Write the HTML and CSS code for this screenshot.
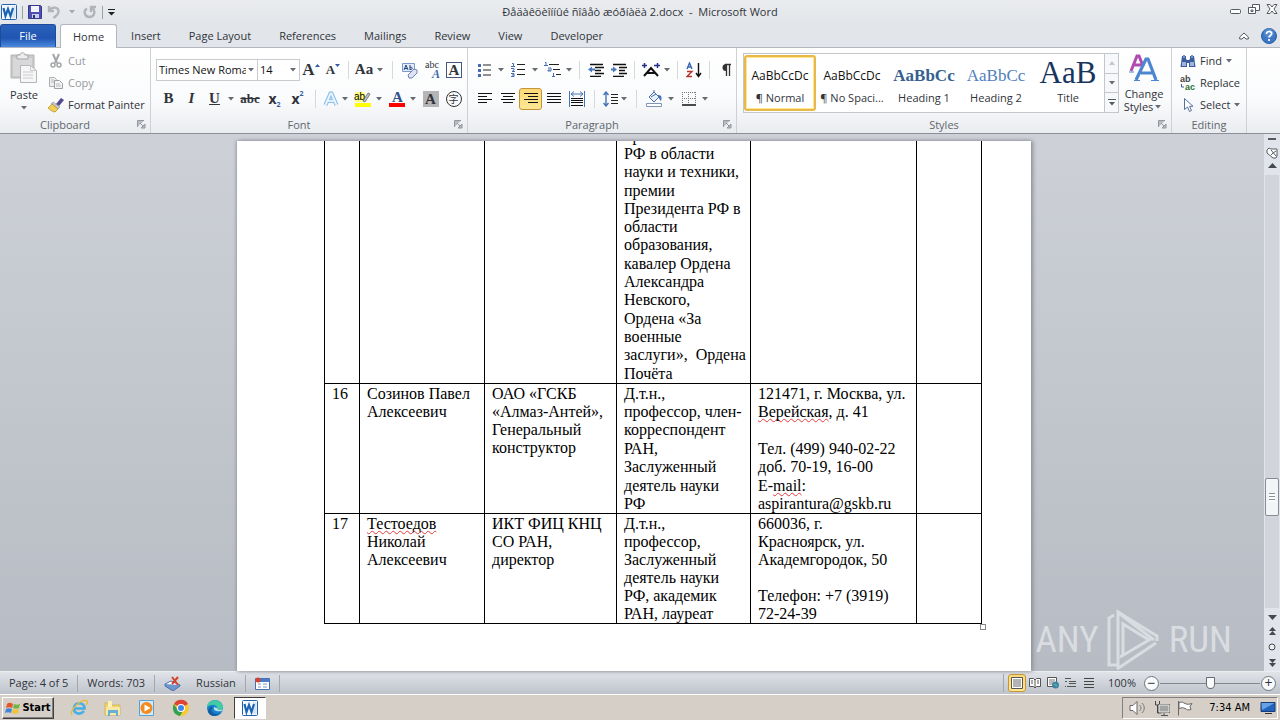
FILE: index.html
```html
<!DOCTYPE html>
<html lang="ru">
<head>
    <meta charset="UTF-8">
    <meta name="viewport" content="width=device-width, initial-scale=1.0">
    <title>Microsoft Word</title>
    <link rel="stylesheet" href="styles.css">
</head>
<body>
    <!-- shared shapes -->
    <svg class="defs" aria-hidden="true">
        <symbol id="down" viewBox="0 0 6 4"><path d="M0 0h6L3 3.5z" fill="#666b73"/></symbol>
        <symbol id="launch" viewBox="0 0 9 9"><path d="M.5 7V.5H7M3 3l3 3M8 4v4H4z" fill="#b8bcc2" stroke="#9297a0"/></symbol>
        <symbol id="word" viewBox="0 0 16 16"><rect x=".5" y=".5" width="15" height="15" rx="1" fill="#f4f9ff" stroke="#2360ad"/><path d="M11 2h3.500v12H11z" fill="#d5e4f6"/><path d="M2.500 4l2 8L7 5l2.500 7 2.500-8" fill="none" stroke="#1b64b4" stroke-width="2.200"/></symbol>
    </svg>

    <header class="titlebar">
        <div class="quick">
            <svg width="16" height="16"><use href="#word"/></svg>
            <span class="bar"></span>
            <button aria-label="Save"><svg width="14" height="14"><path d="M.5.500h12l1 1v12H.5z" fill="#4d4fb5" stroke="#37398d"/><path d="M3 1h8v6H3z" fill="#f5f6fd"/><path d="M4 9h7v4H4z" fill="#c8cdf0"/><path d="M5 10h2v3H5z" fill="#303277"/></svg></button>
            <button aria-label="Undo"><svg width="15" height="14"><path d="M2 1v5h5M2.500 5.500C5 1 12 2 11.500 7c-.3 3-3 4-5 6" fill="none" stroke="#b1b4b9" stroke-width="2.400"/></svg></button>
            <svg class="arrow faint"><use href="#down"/></svg>
            <button aria-label="Redo"><svg width="14" height="14"><path d="M4 3.500C0 6 1.500 12 6.500 12S13 5.500 9 3M8 7V2h5" fill="none" stroke="#b1b4b9" stroke-width="2.400"/></svg></button>
            <span class="bar"></span>
            <button aria-label="Customize toolbar"><svg width="7" height="7"><path d="M0 .500h7" stroke="#222"/><path d="M0 3h7L3.500 6.500z" fill="#222"/></svg></button>
        </div>
        <h1>Ðåäàêöèîííûé ñîâåò æóðíàëà 2.docx&nbsp; -&nbsp; Microsoft Word</h1>
        <div class="window-buttons">
            <button aria-label="Minimize"><svg width="12" height="12"><rect x=".5" y="6.500" width="10" height="4" rx="1" fill="#fff" stroke="#555a62"/></svg></button>
            <button aria-label="Restore"><svg width="12" height="12"><path d="M4.500 1.500h7v6h-7z" fill="#fff" stroke="#555a62"/><path d="M.5 4.500h7v6h-7z" fill="#fff" stroke="#555a62"/><path d="M3 7h2v1.500H3z" fill="none" stroke="#555a62"/></svg></button>
            <button aria-label="Close"><svg width="12" height="12"><path d="M1 1.500h3l2 2.500 2-2.500h3L8 6l3 4.500H8L6 8l-2 2.500H1L4 6z" fill="#fff" stroke="#555a62"/></svg></button>
        </div>
    </header>

    <nav class="tabs">
        <button class="file">File</button>
        <button class="tab active">Home</button>
        <button class="tab">Insert</button>
        <button class="tab">Page Layout</button>
        <button class="tab">References</button>
        <button class="tab">Mailings</button>
        <button class="tab">Review</button>
        <button class="tab">View</button>
        <button class="tab">Developer</button>
        <div class="help">
            <button aria-label="Minimize ribbon"><svg width="10" height="8"><path d="M.7 5L5 1l4.300 4v2H7L5 5 3 7H.7z" fill="#fff" stroke="#555a62"/></svg></button>
            <button aria-label="Help"><svg width="16" height="16"><circle cx="8" cy="8" r="7.500" fill="#3c76c4" stroke="#2e5fa6"/><circle cx="8" cy="5" r="5" fill="#6c9edc" opacity=".5"/><path d="M5.500 6c0-3.300 5.200-3.300 5.200-.4C10.700 7.500 8 7.400 8 9.500M8 11v2" fill="none" stroke="#fff" stroke-width="1.700"/></svg></button>
        </div>
    </nav>

    <section class="ribbon">
        <div class="group clipboard">
            <div class="content">
                <button class="paste">
                    <svg width="28" height="32"><path d="M1 3h23v23H1z" fill="#c9c9cb" stroke="#b5b5b7"/><path d="M3 6h19v18H3z" fill="#d8d8da"/><path d="M7 5V3h3c0-3 5-3 5 0h3v4H7z" fill="#ececee" stroke="#a6a6a8"/><path d="M10.500 13.500h10l6 5v12h-16z" fill="#f6f6f8" stroke="#b5b5b9"/><path d="M20.500 13.500v5h6M13 20h10M13 23h10M13 26h10" fill="none" stroke="#ccccd0"/></svg>
                    <span>Paste</span>
                    <svg class="arrow"><use href="#down"/></svg>
                </button>
                <div class="stack">
                    <button class="off"><svg width="16" height="16"><path d="M5 1l4 9M11 1L7 10" stroke="#a4a6a9" stroke-width="2"/><circle cx="5" cy="12" r="2" fill="none" stroke="#a4a6a9" stroke-width="1.500"/><circle cx="11" cy="12" r="2" fill="none" stroke="#a4a6a9" stroke-width="1.500"/></svg>Cut</button>
                    <button class="off"><svg width="16" height="16"><path d="M1.500 2.500h5l2 2v7h-7z" fill="#eee" stroke="#adafb2"/><path d="M6.500 5.500h5l3 3v5h-8z" fill="#f4f4f4" stroke="#9fa1a5"/><path d="M3 5h3M3 7h3M8 9h4M8 11h5" stroke="#b8babd"/></svg>Copy</button>
                    <button><svg width="16" height="16"><path d="M8 7l5-6 3 2-5 6z" fill="#514a91"/><path d="M5 5l7 5-2 2-7-5z" fill="#c6c7ce" stroke="#777" stroke-width=".5"/><path d="M4 7l6 5-3 3c-2 0-5-2-7-4z" fill="#f3cf55" stroke="#b18a26" stroke-width=".7"/></svg>Format Painter</button>
                </div>
            </div>
            <div class="caption">Clipboard<svg class="launch"><use href="#launch"/></svg></div>
        </div>

        <div class="group font">
            <div class="content rows">
                <div class="row compact">
                    <label class="combo family"><select aria-label="Font"><option>Times New Roman</option></select><svg class="arrow"><use href="#down"/></svg></label>
                    <label class="combo size"><select aria-label="Font size"><option>14</option></select><svg class="arrow"><use href="#down"/></svg></label>
                    <button class="tool serif big">A<svg width="5" height="14"><path d="M0 4h5L2.500 1z" fill="#345ba0"/></svg></button>
                    <button class="tool serif">A<svg width="5" height="14"><path d="M0 1h5L2.500 4z" fill="#345ba0"/></svg></button>
                    <span class="sep"></span>
                    <button class="tool serif mid">Aa</button><svg class="arrow"><use href="#down"/></svg>
                    <span class="sep wide"></span>
                    <button class="tool" aria-label="Clear formatting"><svg width="16" height="18"><path d="M.5 2.500h12v8H.5z" fill="#e3ecfa" stroke="#7b99cd"/><path d="M2 9l2-5 2 5M2.500 7.500h3M8 4v5M8 6.500c3-1 3 2.500 0 2" fill="none" stroke="#26437e"/><path d="M6 14l6-6 3 1v3l-5 5H7z" fill="#dfe3f4" stroke="#6f82b4"/></svg></button>
                    <button class="tool phonetic" aria-label="Phonetic guide"><span>abc</span><i>A</i></button>
                    <button class="tool serif mid"><span class="boxed">A</span></button>
                </div>
                <div class="row second">
                    <button class="tool serif mid">B</button>
                    <button class="tool serif mid italic">I</button>
                    <button class="tool serif mid under">U</button><svg class="arrow"><use href="#down"/></svg>
                    <button class="tool serif strike">abc</button>
                    <button class="tool bold">x<sub>2</sub></button>
                    <button class="tool bold">x<sup>2</sup></button>
                    <span class="sep wide"></span>
                    <button class="tool narrow" aria-label="Text effects"><svg width="16" height="16"><path d="M2.500 14L7.500 2.500h1l5 11.500M5 10h6" fill="none" stroke="#79b4e2" stroke-width="4"/><path d="M2.500 14L7.500 2.500h1l5 11.500M5 10h6" fill="none" stroke="#c3e0f6" stroke-width="2.600"/><path d="M2.500 14L7.500 2.500h1l5 11.500M5 10h6" fill="none" stroke="#fff"/></svg></button><svg class="arrow"><use href="#down"/></svg>
                    <button class="tool" aria-label="Highlight"><svg width="18" height="18"><path d="M1 13h16v4H1z" fill="#ff0"/><path d="M1 2h10v10H1z" fill="#ffff80"/><text x="0" y="10" class="mark">ab</text><path d="M9 11l5-8 2 1-5 8z" fill="#bfc5ce" stroke="#555" stroke-width=".7"/></svg></button><svg class="arrow"><use href="#down"/></svg>
                    <button class="tool" aria-label="Font color"><svg width="18" height="18"><path d="M1 13h16v4H1z" fill="#f00"/><text x="4" y="12" class="color-a">A</text></svg></button><svg class="arrow"><use href="#down"/></svg>
                    <button class="tool serif mid"><span class="shaded">A</span></button>
                    <button class="tool"><span class="circled">字</span></button>
                </div>
            </div>
            <div class="caption">Font<svg class="launch"><use href="#launch"/></svg></div>
        </div>

        <div class="group paragraph">
            <div class="content rows">
                <div class="row">
                    <button class="tool" aria-label="Bullets"><svg width="14" height="14"><path d="M5 2h8M5 7h8M5 12h8" stroke="#222"/><path d="M0 1h3v3H0zM0 6h3v3H0zM0 11h3v3H0z" fill="#456bb0"/></svg></button><svg class="arrow"><use href="#down"/></svg>
                    <button class="tool" aria-label="Numbering"><svg width="15" height="15"><path d="M6 2.500h8M6 7.500h8M6 12.500h8" stroke="#222"/><path d="M1 1.500h1.500v3M0 4.500h4M0 6.500h3v1.500L1 9.500h3M0 11.500h3v3H0M1 13h2" fill="none" stroke="#456bb0"/></svg></button><svg class="arrow"><use href="#down"/></svg>
                    <button class="tool" aria-label="Multilevel list"><svg width="17" height="15"><path d="M5 2.500h10M9 7.500h7M12 12.500h5" stroke="#222"/><path d="M1 .500h1v3M0 3.500h4M4 6h3v3H4V8h2M9.500 11v3M8 14.500h3" fill="none" stroke="#456bb0"/></svg></button><svg class="arrow"><use href="#down"/></svg>
                    <span class="sep"></span>
                    <button class="tool" aria-label="Decrease indent"><svg width="16" height="14"><path d="M2 1.500h13M7 4.500h9M7 7.500h6M7 10.500h9M2 13.500h11" stroke="#111" stroke-width="1.500"/><path d="M0 6.500l4-3v2h3v2H4v2z" fill="#4979bd"/></svg></button>
                    <button class="tool" aria-label="Increase indent"><svg width="16" height="14"><path d="M2 1.500h13M8 4.500h8M8 7.500h6M8 10.500h8M2 13.500h11" stroke="#111" stroke-width="1.500"/><path d="M6 6.500l-4-3v2H0v2h2v2z" fill="#4979bd"/></svg></button>
                    <span class="sep"></span>
                    <button class="tool" aria-label="Asian layout"><svg width="18" height="14"><path d="M2 13l7-8 7 8M5 10h8" fill="none" stroke="#111" stroke-width="2"/><path d="M0 2.500h5M2.500 0v5M12 2.500h6M15.500 0v5" stroke="#252f86" stroke-width="1.500"/></svg></button><svg class="arrow"><use href="#down"/></svg>
                    <span class="sep"></span>
                    <button class="tool" aria-label="Sort"><svg width="16" height="16"><path d="M1 7l2.500-6L6 7M2 5h3" fill="none" stroke="#3868b2" stroke-width="1.400"/><path d="M1 9.500h5l-5 5h5" fill="none" stroke="#b5362f" stroke-width="1.400"/><path d="M12.500 1v13M10 11l2.500 3.500L15 11" fill="none" stroke="#111" stroke-width="1.400"/></svg></button>
                    <span class="sep"></span>
                    <button class="tool" aria-label="Show marks"><svg width="12" height="14"><path d="M6 1a3.500 3.500 0 000 7z" fill="#333"/><path d="M5 1.500h6M6.500 1v12M9.500 1v12" stroke="#333" stroke-width="1.300"/></svg></button>
                </div>
                <div class="row">
                    <button class="tool" aria-label="Align left"><svg width="14" height="14"><path d="M0 1.500h14M0 4.500h9M0 7.500h14M0 10.500h9" stroke="#111"/></svg></button>
                    <button class="tool" aria-label="Center"><svg width="14" height="14"><path d="M0 1.500h14M2 4.500h10M0 7.500h14M2 10.500h10" stroke="#111"/></svg></button>
                    <button class="tool pressed" aria-label="Align right"><svg width="14" height="14"><path d="M0 1.500h14M4 4.500h10M0 7.500h14M4 10.500h10" stroke="#111"/></svg></button>
                    <button class="tool" aria-label="Justify"><svg width="14" height="14"><path d="M0 1.500h14M0 4.500h14M0 7.500h14M0 10.500h14" stroke="#111"/></svg></button>
                    <button class="tool" aria-label="Distribute"><svg width="16" height="16"><path d="M.5 0v16M15.500 0v16M2 3h12M5 .500L2 3l3 2.500M11 .500L14 3l-3 2.500" fill="none" stroke="#4774b5"/><path d="M2 7.500h12M2 9.500h12M2 11.500h12M2 14.500h12" stroke="#111"/></svg></button>
                    <span class="sep wide"></span>
                    <button class="tool narrow" aria-label="Line spacing"><svg width="15" height="16"><path d="M3 1v14M.5 4L3 1l2.500 3M.5 12L3 15l2.500-3" fill="none" stroke="#4774b5" stroke-width="1.400"/><path d="M8 3.500h7M8 6.500h7M8 9.500h7M8 12.500h7" stroke="#222"/></svg></button><svg class="arrow"><use href="#down"/></svg>
                    <span class="sep wide"></span>
                    <button class="tool" aria-label="Shading"><svg width="17" height="17"><path d="M3 7l5-5 5 5-5 5z" fill="#e9f0fa" stroke="#4a6fa8"/><path d="M8 2V0M5 7l5-3" stroke="#4a6fa8"/><path d="M12 5c4 0 4 3 3 6-2-1-1-3-3-4z" fill="#3f6fb6"/><path d="M.5 13.500h15v3H.5z" fill="#fff" stroke="#7f95b8"/></svg></button><svg class="arrow"><use href="#down"/></svg>
                    <button class="tool" aria-label="Borders"><svg width="14" height="14"><path d="M.5 0v12M6.500 0v12M13.500 0v12M0 .500h14M0 6.500h14" stroke="#777" stroke-dasharray="1 1"/><path d="M0 13h14" stroke="#111" stroke-width="1.500"/></svg></button><svg class="arrow"><use href="#down"/></svg>
                </div>
            </div>
            <div class="caption">Paragraph<svg class="launch"><use href="#launch"/></svg></div>
        </div>

        <div class="group styles">
            <div class="content">
                <div class="gallery">
                    <button class="style chosen"><span class="sample">AaBbCcDc</span><span>¶ Normal</span></button>
                    <button class="style"><span class="sample">AaBbCcDc</span><span>¶ No Spaci...</span></button>
                    <button class="style"><span class="sample h1">AaBbCc</span><span>Heading 1</span></button>
                    <button class="style"><span class="sample h2">AaBbCc</span><span>Heading 2</span></button>
                    <button class="style"><span class="sample title">AaB</span><span>Title</span></button>
                    <div class="scroller">
                        <button aria-label="Previous row"><svg width="6" height="4"><path d="M0 4h6L3 0z" fill="#c3c6ca"/></svg></button>
                        <button aria-label="Next row"><svg class="arrow"><use href="#down"/></svg></button>
                        <button aria-label="More styles"><svg width="8" height="7"><path d="M0 .500h8" stroke="#555a62"/><path d="M1 3h6L4 6.500z" fill="#555a62"/></svg></button>
                    </div>
                </div>
                <button class="change">
                    <svg width="30" height="30"><path d="M2 18L8 3h2l4 10M4 12h8" fill="none" stroke="#b04bb0" stroke-width="3"/><path d="M7 27L17 6h2l8 21M12 20h11" fill="none" stroke="#4d86d0" stroke-width="3.200"/><path d="M5 27.500h6M22 27.500h8M0 19h5" stroke="#4d86d0"/></svg>
                    <span class="first">Change</span>
                    <span>Styles <svg class="arrow"><use href="#down"/></svg></span>
                </button>
            </div>
            <div class="caption">Styles<svg class="launch"><use href="#launch"/></svg></div>
        </div>

        <div class="group editing">
            <div class="content">
                <div class="stack">
                    <button><svg width="16" height="16"><path d="M2 3h4v3l1 1h2l1-1V3h4l1.500 11H9v-4H7v4H.5z" fill="#3d5e9e"/><path d="M3 2h2v3H3zM11 2h2v3h-2z" fill="#7390c9"/><path d="M2 9h4v4H2zM10 9h4v4h-4z" fill="#9bb4e0"/></svg>Find<svg class="arrow"><use href="#down"/></svg></button>
                    <button><svg width="16" height="16"><text x="0" y="7" class="tiny">ab</text><text x="5" y="15" class="tiny green">ac</text><path d="M1.500 9v3H4" fill="none" stroke="#3d5e9e"/></svg>Replace</button>
                    <button><svg width="16" height="16"><path d="M4.500 1.500v11l3-2.500 2 4.500 2-1-2-4.200h3.500z" fill="#fff" stroke="#56719f"/></svg>Select<svg class="arrow"><use href="#down"/></svg></button>
                </div>
            </div>
            <div class="caption plain">Editing</div>
        </div>
    </section>

    <main class="workspace">
        <div class="viewport">
            <article class="page">
                <table>
                    <colgroup><col class="c1"><col class="c2"><col class="c3"><col class="c4"><col class="c5"><col class="c6"></colgroup>
                    <tr>
                        <td></td>
                        <td></td>
                        <td></td>
                        <td>
                            <p>премии<br>РФ в области<br>науки и техники,</p>
                            <p>премии<br>Президента РФ в<br>области<br>образования,</p>
                            <p>кавалер Ордена<br>Александра<br>Невского,</p>
                            <p>Ордена «За<br>военные<br>заслуги»,&nbsp; Ордена</p>
                            <p>Почёта</p>
                        </td>
                        <td></td>
                        <td></td>
                    </tr>
                    <tr>
                        <td><p>16</p></td>
                        <td><p>Созинов Павел<br>Алексеевич</p></td>
                        <td><p>ОАО «ГСКБ<br>«Алмаз-Антей»,<br>Генеральный<br>конструктор</p></td>
                        <td>
                            <p>Д.т.н.,<br>профессор, член-<br>корреспондент</p>
                            <p>РАН,<br>Заслуженный</p>
                            <p>деятель науки<br>РФ</p>
                        </td>
                        <td>
                            <p>121471, г. Москва, ул.<br><span class="typo">Верейская</span>, д. 41<br><br></p>
                            <p>Тел. (499) 940-02-22<br>доб. 70-19, 16-00</p>
                            <p>E-<span class="typo">mail</span>:<br>aspirantura@gskb.ru</p>
                        </td>
                        <td></td>
                    </tr>
                    <tr>
                        <td><p>17</p></td>
                        <td><p><span class="typo">Тестоедов</span><br>Николай<br>Алексеевич</p></td>
                        <td><p>ИКТ ФИЦ КНЦ<br>СО РАН,<br>директор</p></td>
                        <td><p>Д.т.н.,<br>профессор,<br>Заслуженный<br>деятель науки<br>РФ, академик<br>РАН, лауреат</p></td>
                        <td><p>660036, г.<br>Красноярск, ул.<br>Академгородок, 50<br><br>Телефон: +7 (3919)<br>72-24-39</p></td>
                        <td></td>
                    </tr>
                </table>
                <span class="handle"></span>
            </article>
            <div class="watermark">
                <span>ANY</span>
                <svg width="54" height="62"><path d="M10 56H2V9l5-3M11 58V3l39 24v5M13 5l34 26M16 46V15l26 16-29 17M10 60l39-26" fill="none" stroke="#dfe2e6" stroke-width="3"/></svg>
                <span>RUN</span>
            </div>
        </div>
        <aside class="scrollbar">
            <button aria-label="Split"><svg width="8" height="3"><path d="M0 1h8" stroke="#555a62" stroke-width="2"/></svg></button>
            <button class="ruler" aria-label="Ruler"><svg width="12" height="12"><path d="M1 3l2-2 2 1h6v7l-1 2H7L1 6z" fill="#fff" stroke="#555a62"/><path d="M5 3l5 6M7 6l3-2M5 8l2-2" stroke="#555a62"/></svg></button>
            <button aria-label="Scroll up"><svg width="9" height="6"><path d="M0 5h9L4.500 0z" fill="#454a52"/></svg></button>
            <div class="track"><span class="thumb"></span></div>
            <button aria-label="Scroll down"><svg width="9" height="6"><path d="M0 0h9L4.500 5z" fill="#454a52"/></svg></button>
            <button class="jump" aria-label="Previous page"><svg width="7" height="8"><path d="M0 4h7L3.500 0zM0 8h7L3.500 4z" fill="#454a52"/></svg></button>
            <button class="jump" aria-label="Browse object"><svg width="8" height="8"><circle cx="4" cy="4" r="3" fill="#eee" stroke="#454a52"/></svg></button>
            <button class="jump" aria-label="Next page"><svg width="7" height="8"><path d="M0 0h7L3.500 4zM0 4h7L3.500 8z" fill="#454a52"/></svg></button>
        </aside>
    </main>

    <footer class="statusbar">
        <span class="cell">Page: 4 of 5</span>
        <span class="cell">Words: 703</span>
        <span class="cell lang"><svg width="17" height="15"><path d="M1 8l6-3 9 4-7 5z" fill="#fff" stroke="#4a70aa"/><path d="M1 8v2l8 5 7-5V9" fill="#6e96ce" stroke="#4a70aa"/><path d="M8 1l6 8M14 1L8 8" stroke="#d4412f" stroke-width="2"/></svg>Russian</span>
        <span class="cell"><svg width="15" height="13"><path d="M.5 1.500h14v11H.5z" fill="#fff" stroke="#4a70b4"/><path d="M1 2h13v3H1z" fill="#4d7cc7"/><path d="M3 7h3M8 7h4M3 10h3M8 10h4" stroke="#7d96c0"/><circle cx="3" cy="3" r="2.500" fill="#d2432f"/></svg></span>
        <div class="views">
            <button class="pressed" aria-label="Print layout"><svg width="12" height="12"><path d="M.5.500h11v11H.5z" fill="#fff" stroke="#555"/><path d="M2 3h8M2 5h8M2 7h8M2 9h8" stroke="#666"/></svg></button>
            <button aria-label="Full screen reading"><svg width="12" height="12"><path d="M.5 1.500h4L6 3l1.500-1.500h4v8h-4L6 11 4.500 9.500h-4zM6 3v8M2 4h2M2 6h2M8 4h2M8 6h2" fill="#fff" stroke="#555"/></svg></button>
            <button aria-label="Web layout"><svg width="12" height="12"><path d="M.5.500h9v9h-9z" fill="#fff" stroke="#555"/><path d="M2 3h6M2 5h5M2 7h4" stroke="#777"/><circle cx="8.500" cy="8" r="3.500" fill="#3f83a8"/><path d="M7 7l3 2" stroke="#7ac17a"/></svg></button>
            <button aria-label="Outline"><svg width="12" height="12"><path d="M0 1.500h6M4 4.500h7M4 6.500h7M2 9.500h9" stroke="#555"/><path d="M0 4.500h2M0 9.500h1" stroke="#555"/></svg></button>
            <button aria-label="Draft"><svg width="12" height="12"><path d="M1 1.500h10M1 4.500h10M1 7.500h10M1 10.500h10" stroke="#444"/></svg></button>
        </div>
        <span class="percent">100%</span>
        <button class="round" aria-label="Zoom out">−</button>
        <input class="zoom" type="range" min="0" max="100" value="50" aria-label="Zoom">
        <button class="round" aria-label="Zoom in">+</button>
    </footer>

    <div class="taskbar">
        <button class="start"><svg width="16" height="16"><path d="M2 4c2-2 4-1 6 0L7 8C5 7 3 7 1 8z" fill="#e2562b"/><path d="M9 4c2 1 4 1 6 0l-1 4c-2 1-4 1-6 0z" fill="#71b543"/><path d="M1 9c2-1 4-1 6 0l-1 4c-2-1-4-1-6 0z" fill="#3f86d6"/><path d="M8 9c2 1 4 1 6 0l-1 4c-2 1-4 1-6 0z" fill="#f4c330"/></svg>Start</button>
        <div class="launchers">
            <button aria-label="Internet Explorer"><svg width="18" height="18"><path d="M3.500 9.500h11c0-7-10.500-7-10.500 0 0 6 7 6.500 10 2.500" fill="none" stroke="#47afe5" stroke-width="2.600"/><path d="M2 16C-2 12 12-1 17 2c1 1 0 3-1 4" fill="none" stroke="#e6bd38" stroke-width="1.300"/></svg></button>
            <button aria-label="Explorer"><svg width="18" height="18"><path d="M1 4h6l1 2h8v10H1z" fill="#f0d36e" stroke="#cba740" stroke-width=".6"/><path d="M4 2h4v8H4z" fill="#faf1b9"/><path d="M2 8h14v8H2z" fill="#f9e7a4"/><path d="M4 17v-6h10v6h-2v-3H6v3z" fill="#65b0d8"/></svg></button>
            <button aria-label="Media Player"><svg width="18" height="18"><path d="M1.500 1.500h14v15h-14z" fill="#d7eaf8" stroke="#5ba2d2"/><circle cx="8.500" cy="9" r="6" fill="#f28a1e"/><path d="M6.500 5.500l6 3.500-6 3.500z" fill="#fff"/></svg></button>
            <button aria-label="Chrome"><svg width="18" height="18"><circle cx="9" cy="9" r="8" fill="#f7cb2d"/><path d="M9 9L2 5a8 8 0 0114 0z" fill="#dd4436"/><path d="M2 5a8 8 0 006 12l4-7H5z" fill="#34a152"/><circle cx="9" cy="9" r="4" fill="#fff"/><circle cx="9" cy="9" r="3" fill="#4285e8"/></svg></button>
            <button aria-label="Edge"><svg width="18" height="18"><circle cx="9" cy="9" r="8" fill="#1683cd"/><path d="M1 8c1-9 15-9 16 0 0 4-5 4-6 2 1-4-5-6-10-2z" fill="#43cba5"/><path d="M7 8c-4 4 1 9 7 6-3 4-10 4-12-1 0-4 3-6 5-5z" fill="#125c9f"/><path d="M8 8c-1 4 3 5 8 4l1-2c-2 2-6 1-6-1z" fill="#fff" opacity=".7"/></svg></button>
            <button class="running" aria-label="Word"><svg width="16" height="16"><use href="#word"/></svg></button>
        </div>
        <div class="tray">
            <svg width="18" height="16"><path d="M1 5.500h3l4-4v13l-4-4H1z" fill="#fff" stroke="#666"/><path d="M10.500 5c2 2 2 4 0 6M13 3c3 3 3 7 0 10" fill="none" stroke="#777"/></svg>
            <svg width="16" height="16"><path d="M4.500 4.500h11v8h-11z" fill="#a4a4a4" stroke="#555"/><path d="M7 15.500h7M10 13v2" stroke="#555"/><path d="M1.500 1v4h4V1M3.500 5v8h4" fill="none" stroke="#444"/><path d="M5 5h10v7H5z" fill="none" stroke="#eee"/></svg>
            <svg width="17" height="16"><path d="M1.500 1v14.500M2 2.500c3-1 4 0 6 1s4 1 7 0l-2 3 1 3c-3 1-4 0-6-1s-3-1-6 0z" fill="#fff" stroke="#666"/></svg>
            <time>7:34 AM</time>
            <svg width="16" height="14"><path d="M1 1.500h14v9H1z" fill="#2463bd" stroke="#173c76"/><path d="M1.500 2h13L2 9z" fill="#67a2e4"/><path d="M5 12.500h7" stroke="#333"/></svg>
        </div>
    </div>
</body>
</html>
```
FILE: styles.css
```css
* {
    box-sizing: border-box;
}
body {
    margin: 0;
    height: 100vh;
    display: flex;
    flex-direction: column;
    overflow: hidden;
    font: 11px/14px "Open Sans", "Noto Sans", sans-serif;
    color: #30343a;
    background: #e3e6ea;
}
button {
    font: inherit;
    color: inherit;
    background: none;
    border: 0;
    padding: 0;
    display: flex;
    align-items: center;
    justify-content: center;
    white-space: nowrap;
}
svg {
    flex: none;
}
.defs {
    position: absolute;
    width: 0;
    height: 0;
}
.arrow {
    width: 6px;
    height: 4px;
    margin: 0 3px 0 2px;
}
.faint {
    opacity: 0.5;
}

/* title bar */
.titlebar {
    height: 24px;
    display: grid;
    grid-template-columns: 1fr auto 1fr;
    align-items: center;
    background: linear-gradient(#eaecef, #e2e5e9);
}
.titlebar h1 {
    margin: 0;
    font-size: 11px;
    font-weight: normal;
}
.quick {
    display: flex;
    align-items: center;
    gap: 5px;
    padding-left: 1px;
}
.bar {
    width: 1px;
    height: 13px;
    background: #9da1a7;
}
.window-buttons {
    display: flex;
    justify-content: flex-end;
    gap: 6px;
    padding: 0 2px 6px 0;
}

/* tabs */
.tabs {
    height: 24px;
    display: flex;
    background: #e2e5e9;
    border-bottom: 1px solid #b3b7bd;
}
.file {
    width: 56px;
    margin-right: 4px;
    color: #fff;
    border: 1px solid #1e4b9c;
    border-bottom: 0;
    border-radius: 3px 3px 0 0;
    background: linear-gradient(#2a62ba, #2055b2 60%, #4b8ae0);
}
.tab {
    padding: 0 14px;
}
.tab.active {
    padding: 0 12px;
    margin: 0 0 -1px;
    background: #fff;
    border: 1px solid #b3b7bd;
    border-bottom: 0;
    border-radius: 3px 3px 0 0;
}
.help {
    display: flex;
    gap: 12px;
    margin-left: auto;
    padding-right: 3px;
}

/* ribbon */
.ribbon {
    height: 86px;
    flex: none;
    display: flex;
    background: linear-gradient(#fff, #fafbfc 60%, #e9ecf0);
    border-bottom: 1px solid #8b9097;
}
.group {
    display: flex;
    flex-direction: column;
    border-right: 1px solid #cdd1d6;
}
.clipboard {
    width: 151px;
}
.font {
    width: 317px;
}
.paragraph {
    width: 269px;
}
.styles {
    width: 435px;
}
.editing {
    width: 75px;
}
.content {
    flex: 1;
    display: flex;
    padding-top: 2px;
}
.rows {
    flex-direction: column;
    gap: 6px;
    padding: 10px 0 0 5px;
}
.row {
    height: 23px;
    display: flex;
    align-items: center;
}
.second {
    padding-left: 1px;
}
.caption {
    height: 17px;
    display: flex;
    align-items: center;
    justify-content: center;
    position: relative;
    padding-right: 20px;
    color: #62666d;
}
.caption.plain {
    padding-right: 0;
}
.launch {
    position: absolute;
    right: 4px;
    width: 9px;
    height: 9px;
}
.paste {
    flex-direction: column;
    justify-content: flex-start;
    width: 48px;
    padding-top: 2px;
    gap: 4px;
}
.stack {
    display: flex;
    flex-direction: column;
}
.stack button {
    height: 22px;
    gap: 4px;
    justify-content: flex-start;
}
.editing .content {
    padding-left: 8px;
}
.editing .arrow {
    margin: 0;
}
.off {
    color: #989ba0;
}
.combo {
    height: 22px;
    flex: none;
    display: flex;
    align-items: center;
    border: 1px solid #c8ccd1;
    background: #fff;
    color: #111;
}
.combo select {
    flex: 1;
    min-width: 0;
    appearance: none;
    border: 0;
    padding: 0 0 0 2px;
    background: none;
    font: inherit;
    color: inherit;
}
.family {
    width: 102px;
}
.size {
    width: 43px;
    margin-left: -1px;
}
.tool {
    width: 23px;
    height: 22px;
    flex: none;
}
.compact .tool {
    width: 22px;
}
.narrow {
    width: 18px;
}
.sep {
    width: 1px;
    height: 18px;
    flex: none;
    margin: 0 4px;
    background: #d5d8dc;
}
.wide {
    margin: 0 6px;
}
.pressed {
    border: 1px solid #c79432;
    border-radius: 3px;
    background: linear-gradient(#fbd978, #ffe794);
}
.serif {
    font: bold 13px "Liberation Serif", serif;
}
.serif.mid {
    font-size: 15px;
}
.serif.big {
    font-size: 17px;
}
.serif.italic {
    font-style: italic;
}
.under {
    text-decoration: underline;
}
.serif.strike {
    width: 26px;
    text-decoration: line-through;
}
.bold {
    font-weight: bold;
    font-size: 14px;
}
.bold sub,
.bold sup {
    font-size: 7px;
    line-height: 7px;
    color: #345ba0;
}
.bold sub {
    align-self: flex-end;
    padding-bottom: 2px;
}
.bold sup {
    align-self: flex-start;
    padding-top: 2px;
}
.phonetic {
    flex-direction: column;
    font: 10px/9px "Liberation Serif", serif;
}
.phonetic i {
    align-self: flex-end;
    padding-right: 3px;
    font-size: 12px;
    line-height: 11px;
    font-weight: bold;
    color: #3868b2;
}
.boxed,
.shaded {
    width: 16px;
    line-height: 16px;
}
.boxed {
    border: 1px solid #45577c;
    line-height: 14px;
}
.shaded {
    background: #b5b5b5;
}
.circled {
    width: 16px;
    border: 1px solid #333;
    border-radius: 8px;
    font: 10px/14px "Noto Sans CJK SC", sans-serif;
}
.mark {
    font: 10px "Liberation Sans", sans-serif;
}
.color-a {
    font: bold 15px "Liberation Serif", serif;
    fill: #31528b;
}
.tiny {
    font: bold 9px "Liberation Sans", sans-serif;
    fill: #444;
}
.green {
    fill: #2d7430;
}

/* styles gallery */
.styles .content {
    padding: 5px 2px 0 6px;
}
.gallery {
    height: 60px;
    display: flex;
    border: 1px solid #c3c7cc;
    background: #fff;
}
.style {
    width: 72px;
    height: 56px;
    flex-direction: column;
    justify-content: flex-end;
    margin-top: 1px;
    padding: 0 4px 6px;
}
.chosen {
    border: 2px solid #e8b84b;
    border-radius: 3px;
    box-shadow: inset 0 0 0 1px #ffe58b;
    padding: 0 2px 4px;
}
.sample {
    height: 30px;
    line-height: 30px;
    color: #111;
    font-size: 12px;
}
.sample.h1 {
    font: bold 17px/30px "Liberation Serif", serif;
    color: #365f91;
}
.sample.h2 {
    font: 17px/30px "Liberation Serif", serif;
    color: #4f81bd;
}
.sample.title {
    height: 36px;
    font: 31px/36px "Liberation Serif", serif;
    color: #17365d;
}
.scroller {
    width: 14px;
    display: flex;
    flex-direction: column;
    border-left: 1px solid #c3c7cc;
}
.scroller button {
    flex: 1;
    background: #f7f8fa;
}
.scroller button + button {
    border-top: 1px solid #c3c7cc;
}
.scroller .arrow,
.paste .arrow {
    margin: 0;
}
.change {
    width: 50px;
    flex-direction: column;
    justify-content: flex-start;
}
.change span {
    line-height: 13px;
    display: flex;
    align-items: center;
}
.change .first {
    padding-top: 4px;
}

/* document */
.workspace {
    flex: 1;
    min-height: 0;
    display: flex;
    background: linear-gradient(#cdd0d7, #b7bbc3);
}
.viewport {
    flex: 1;
    position: relative;
    padding: 7px 0 0 4px;
}
.page {
    width: 794px;
    height: 100%;
    margin: 0 auto;
    padding-left: 87px;
    overflow: hidden;
    background: #fff;
    box-shadow: 2px 0 4px #8c9097, -1px 0 3px #9b9fa6;
}
table {
    width: 658px;
    margin-top: -16px;
    table-layout: fixed;
    border-collapse: collapse;
    font: 16px/18px "Liberation Serif", serif;
    color: #000;
}
td {
    height: 18px;
    padding: 0 0 0 7px;
    border: 1px solid #000;
    vertical-align: top;
    white-space: nowrap;
}
td p {
    margin: 1px 0 0;
}
.c1 {
    width: 35px;
}
.c2 {
    width: 125px;
}
.c3 {
    width: 132px;
}
.c4 {
    width: 134px;
}
.c5 {
    width: 166px;
}
.typo {
    text-decoration: underline wavy #e23b3b 1px;
    text-decoration-skip-ink: none;
}
.handle {
    display: block;
    width: 6px;
    height: 6px;
    margin-left: 656px;
    border: 1px solid #888;
}
.watermark {
    position: absolute;
    right: 32px;
    bottom: 0;
    display: flex;
    align-items: center;
    gap: 8px;
    color: #dfe2e6;
    font: 37px/60px "Roboto Condensed", "Liberation Sans Narrow", "Liberation Sans", sans-serif;
    opacity: 0.85;
}
.scrollbar {
    width: 16px;
    display: flex;
    flex-direction: column;
    background: #e1e4ea;
}
.scrollbar button {
    height: 11px;
}
.scrollbar .ruler {
    height: 15px;
}
.scrollbar .jump {
    height: 16px;
}
.track {
    flex: 1;
    display: flex;
    flex-direction: column;
    justify-content: flex-end;
    margin: 4px 1px;
    padding-bottom: 92px;
    background: #d1d4db;
}
.thumb {
    height: 38px;
    border: 1px solid #868b94;
    border-radius: 2px;
    background: repeating-linear-gradient(#8c9199 0 1px, #fff 1px 3px) center / 6px 9px no-repeat, #f3f4f7;
}

/* status bar */
.statusbar {
    height: 23px;
    flex: none;
    display: flex;
    align-items: center;
    padding-right: 4px;
    border-top: 1px solid #eceef1;
    background: linear-gradient(#e0e3e8, #bec3cb);
}
.cell {
    height: 17px;
    display: flex;
    align-items: center;
    padding: 0 9px;
    border-right: 1px solid #a3a8b0;
}
.lang {
    gap: 15px;
}
.views {
    display: flex;
    margin-left: auto;
    padding-left: 4px;
    border-left: 1px solid #a3a8b0;
}
.views button {
    width: 18px;
    height: 18px;
}
.percent {
    margin: 0 8px 0 10px;
}
.round {
    width: 15px;
    height: 15px;
    border: 1px solid #70757e;
    border-radius: 8px;
    background: #f9fafb;
    font-size: 14px;
    line-height: 12px;
}
.zoom {
    width: 100px;
    height: 16px;
    margin: 0 1px;
    appearance: none;
    background: linear-gradient(#82878f, #82878f) center / 100% 1px no-repeat;
}
.zoom::-webkit-slider-thumb {
    appearance: none;
    width: 9px;
    height: 12px;
    border: 1px solid #666b73;
    border-radius: 1px 1px 5px 5px;
    background: #fafbfc;
}

/* taskbar */
.taskbar {
    height: 26px;
    flex: none;
    display: flex;
    align-items: center;
    padding: 0 2px;
    background: #d5cfc7;
    border-top: 1px solid #fff;
    font-family: "DejaVu Sans Condensed", "DejaVu Sans", sans-serif;
    color: #000;
}
.start {
    width: 52px;
    height: 22px;
    gap: 1px;
    font-weight: bold;
    border: 1px solid;
    border-color: #fff #404040 #404040 #fff;
    box-shadow: inset -1px -1px #808080;
}
.launchers {
    display: flex;
    align-items: center;
    gap: 16px;
    padding-left: 16px;
}
.running {
    width: 32px;
    height: 22px;
    margin-left: -6px;
    background: #fff;
    border: 1px solid;
    border-color: #404040 #fff #fff #404040;
}
.tray {
    height: 22px;
    display: flex;
    align-items: center;
    gap: 7px;
    margin-left: auto;
    padding: 0 1px 0 6px;
    border: 1px solid;
    border-color: #808080 #fff #fff #808080;
}
.tray time {
    padding: 0 3px 0 8px;
}
```
